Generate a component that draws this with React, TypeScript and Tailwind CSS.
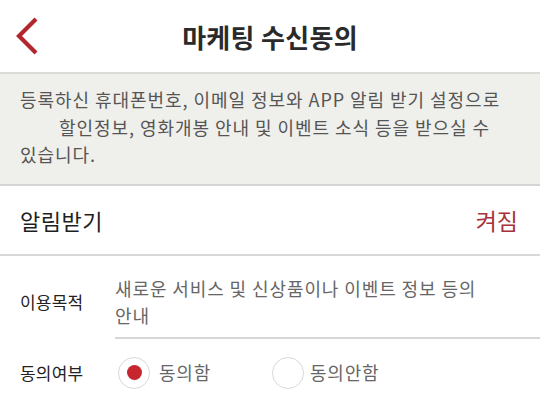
import React from "react";

const font = { fontFamily: '"Noto Sans CJK KR", "Noto Sans", sans-serif' };

export default function App() {
  return (
    <div className="w-[540px] h-[397px] overflow-hidden bg-white" style={font}>
      <header className="grid grid-cols-[60px_1fr_60px] items-center h-[72px] bg-white">
        <div className="flex items-center pl-[14px]">
          <svg width="26" height="40" viewBox="0 0 26 40">
            <path d="M22 3 L5 20 L22 37" fill="none" stroke="#b3262d" strokeWidth="4.2" strokeLinecap="butt" strokeLinejoin="miter" />
          </svg>
        </div>
        <h1 className="text-center text-[26px] font-bold text-[#2a2a2a] tracking-[0.3px]">마케팅 수신동의</h1>
        <div />
      </header>
      <section className="bg-[#efefeb] border-t-[2px] border-b-[2px] border-t-[#dcdcd7] border-b-[#d4d4d2] pt-[12px] pb-[15px] pl-[20px] text-[18px] leading-[27.5px] text-[#555555] tracking-[0.95px] whitespace-nowrap">
        <div>등록하신 휴대폰번호, 이메일 정보와 APP 알림 받기 설정으로</div>
        <div className="pl-[39px]">할인정보, 영화개봉 안내 및 이벤트 소식 등을 받으실 수</div>
        <div>있습니다.</div>
      </section>
      <div className="flex items-center justify-between h-[70px] pl-[20px] pr-[22px] pt-[2px] border-b-[2px] border-[#d8d8d8]">
        <span className="text-[22px] text-[#1f1f1f] tracking-[0.5px]">알림받기</span>
        <span className="text-[23px] text-[#a8323b] tracking-[0px]">켜짐</span>
      </div>
      <div className="flex pt-[19px]">
        <div className="w-[115px] pl-[20px] pt-[14px] text-[17px] text-[#222222] tracking-[0.2px]">이용목적</div>
        <div className="flex-1 border-b-[2px] border-[#d6d6d6] pb-[8px] text-[18px] leading-[27px] text-[#666666] tracking-[0.9px] whitespace-nowrap">
          새로운 서비스 및 신상품이나 이벤트 정보 등의<br />안내
        </div>
      </div>
      <div className="flex items-center h-[68px]">
        <div className="w-[118px] pl-[20px] text-[17px] text-[#222222] tracking-[0.2px]">동의여부</div>
        <label className="flex items-center gap-[9px] w-[154px]">
          <span className="flex items-center justify-center w-[32px] h-[32px] rounded-full border border-[#d9d9d9]">
            <span className="w-[15px] h-[15px] rounded-full bg-[#c8262e]" />
          </span>
          <span className="text-[18px] text-[#666666] tracking-[0.8px]">동의함</span>
        </label>
        <label className="flex items-center gap-[6px]">
          <span className="w-[32px] h-[32px] rounded-full border border-[#d9d9d9]" />
          <span className="text-[18px] text-[#666666] tracking-[0.8px]">동의안함</span>
        </label>
      </div>
    </div>
  );
}
